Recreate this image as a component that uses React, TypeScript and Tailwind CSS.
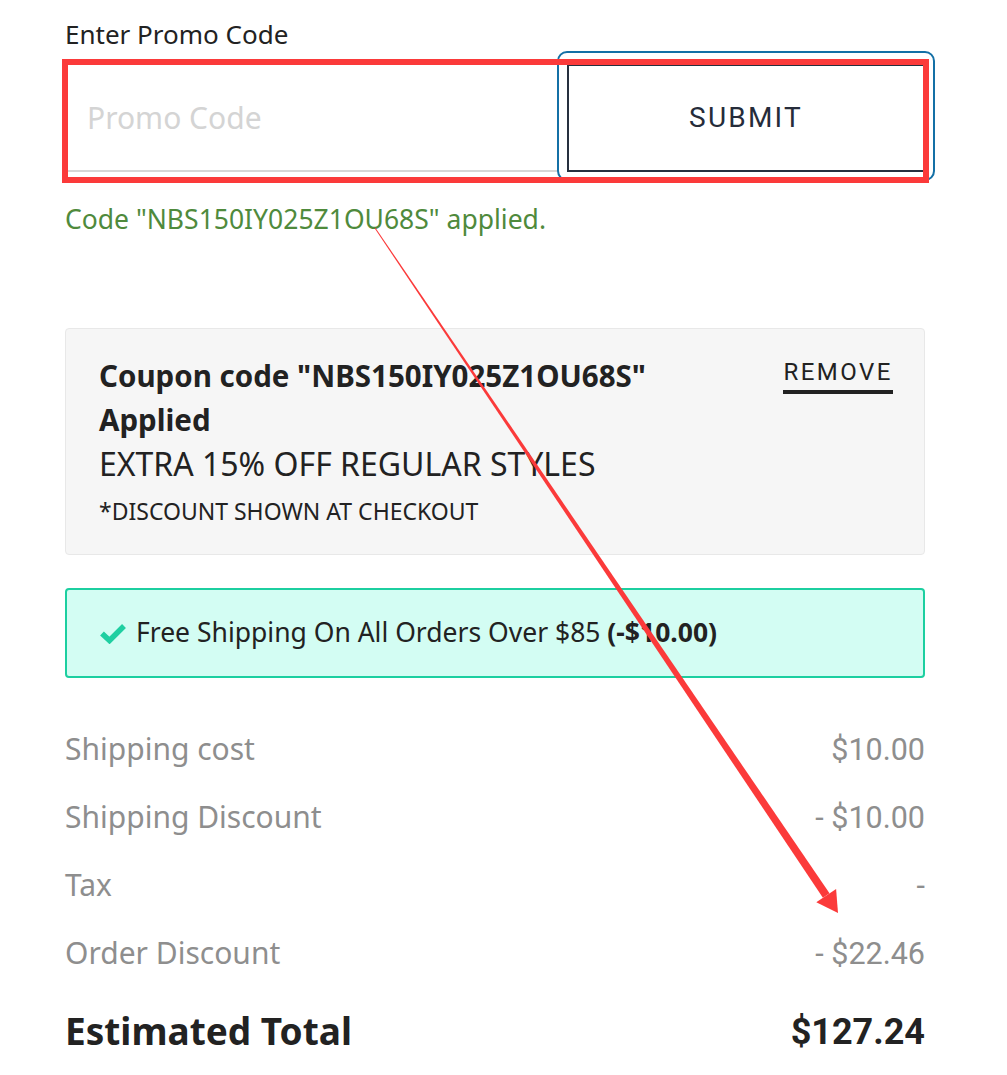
import React from "react";

const plex = { fontFamily: '"Noto Sans", "Open Sans", sans-serif' };
const roboto = { fontFamily: 'Roboto, "Liberation Sans", sans-serif' };

const rows = [
  { label: "Shipping cost", value: "$10.00" },
  { label: "Shipping Discount", value: "- $10.00" },
  { label: "Tax", value: "-" },
  { label: "Order Discount", value: "- $22.46" },
];

const CheckIcon = () => (
  <svg width="26" height="21" viewBox="0 0 26 21" className="shrink-0">
    <path d="M2 10.5 L9.5 17.5 L24 3" fill="none" stroke="#1fcfa1" strokeWidth="5.5" strokeLinejoin="miter" />
  </svg>
);

// red annotation drawn on top of the screenshot
const Annotation = () => (
  <>
    <div className="absolute left-[62px] top-[59px] w-[867px] h-[124px] border-[6px] border-[#fb3a3a] pointer-events-none" />
    <svg className="absolute left-0 top-0 pointer-events-none" width="1007" height="1075" viewBox="0 0 1007 1075">
      <polygon points="374.6,228.3 375.4,227.7 829.5,893.3 822.9,897.8" fill="#fb3a3a" />
      <polygon points="816.3,902.3 836.1,888.9 838,913" fill="#fb3a3a" />
    </svg>
  </>
);

export default function App() {
  return (
    <div className="relative w-[1007px] h-[1075px] bg-white overflow-hidden" style={plex}>
      <div className="pl-[65px] pr-[82px] pt-[17px]">
        <div className="text-[26px] leading-[34px] text-[#222]">Enter Promo Code</div>

        <div className="flex mt-[13px] h-[108px]">
          <div className="w-[492px] border-b-2 border-[#d6d6d6] flex items-center pl-[22px]">
            <span className="text-[30px] text-[#d4d4d4]">Promo Code</span>
          </div>
          <div className="relative ml-[10px] flex-1">
            <span className="absolute -left-[10px] -top-[13px] -right-[10px] -bottom-[9px] rounded-[10px] border-2 border-[#1470a6]" />
            <button
              className="relative w-full h-full border-2 border-[#26303f] bg-white text-[28px] tracking-[2.2px] text-[#262c3a]"
              style={roboto}
            >
              SUBMIT
            </button>
          </div>
        </div>

        <div className="mt-[30px] text-[26.5px] leading-[34px] text-[#4f8a3c]">
          Code "NBS150IY025Z1OU68S" applied.
        </div>

        <div className="mt-[92px] bg-[#f6f6f6] border border-[#e8e8e8] rounded-[4px] pl-[33px] pr-[33px] pt-[25px] pb-[28px] flex justify-between">
          <div className="text-[#222]">
            <div className="text-[29.5px] leading-[44px] font-bold">
              Coupon code "NBS150IY025Z1OU68S"
              <br />
              Applied
            </div>
            <div className="text-[32px] leading-[44px]">EXTRA 15% OFF REGULAR STYLES</div>
            <div className="text-[23px] leading-[30px] mt-[10px]">*DISCOUNT SHOWN AT CHECKOUT</div>
          </div>
          <div className="pt-[4px]">
            <span
              className="inline-block text-[24px] leading-[28px] tracking-[2.5px] text-[#222] border-b-4 border-[#222] pb-[4px] -mr-[2px]"
              style={roboto}
            >
              REMOVE
            </span>
          </div>
        </div>

        <div className="mt-[33px] h-[90px] bg-[#d3fdf3] border-2 border-[#1ccfa0] rounded-[4px] flex items-center pl-[33px] gap-[10px]">
          <CheckIcon />
          <span className="text-[26.5px] text-[#222]">
            Free Shipping On All Orders Over $85 <b>(-$10.00)</b>
          </span>
        </div>

        <div className="mt-[48px] flex flex-col gap-[24px]">
          {rows.map((r) => (
            <div key={r.label} className="flex justify-between items-center h-[44px] text-[30px] text-[#8e8e8e]">
              <span>{r.label}</span>
              <span className="text-[30.5px] pt-[3px]" style={roboto}>{r.value}</span>
            </div>
          ))}
        </div>

        <div className="mt-[32px] flex justify-between items-center h-[50px] font-bold text-[#222]">
          <span className="text-[37px]">Estimated Total</span>
          <span className="text-[36px] pt-[2px]" style={roboto}>$127.24</span>
        </div>
      </div>
      <Annotation />
    </div>
  );
}
